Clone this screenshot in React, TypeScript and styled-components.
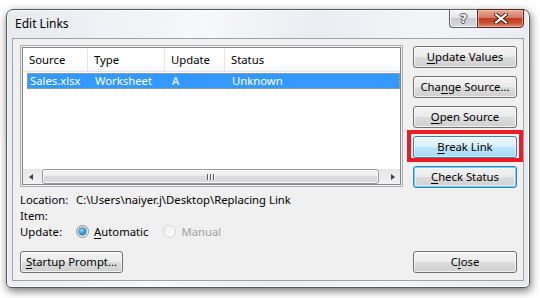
import React from "react";
import styled, { createGlobalStyle, css } from "styled-components";

const GlobalStyle = createGlobalStyle`
  html, body {
    margin: 0;
    padding: 0;
    background: #ffffff;
  }
  body {
    font-family: "Noto Sans", "Segoe UI", sans-serif;
    font-size: 11.3px;
    color: #000000;
  }
`;

const Page = styled.div`
  width: 540px;
  height: 298px;
  box-sizing: border-box;
  padding: 9px 0 0 6px;
  overflow: hidden;
`;

const Window = styled.div`
  width: 524px;
  height: 279px;
  box-sizing: border-box;
  display: flex;
  flex-direction: column;
  padding: 0 5px 6px 5px;
  border: 1px solid #55595e;
  border-radius: 7px 7px 5px 5px;
  background: linear-gradient(100deg, #e6ebf0 0%, #f6f8fa 35%, #e9edf1 55%, #f3f5f8 75%, #e4e9ee 100%);
  box-shadow: 1px 3px 9px rgba(0, 0, 0, 0.55), inset 0 0 0 1px rgba(255, 255, 255, 0.7);
`;

const TitleBar = styled.div`
  height: 28px;
  display: flex;
  align-items: flex-start;
`;

const Title = styled.div`
  padding-left: 3px;
  line-height: 28px;
  font-size: 12px;
  color: #000000;
`;

const CaptionButtons = styled.div`
  margin-left: auto;
  margin-top: -1px;
  display: flex;
`;

const CaptionButton = styled.div<{ $kind: "help" | "close" }>`
  height: 19px;
  box-sizing: border-box;
  display: flex;
  align-items: center;
  justify-content: center;
  border: 1px solid #5b5e63;
  ${(p) =>
    p.$kind === "help"
      ? css`
          width: 28px;
          border-right: none;
          border-radius: 0 0 0 4px;
          background: linear-gradient(#f4f5f6 0%, #e4e6e9 45%, #c8ccd1 50%, #d6dade 100%);
          box-shadow: inset 0 0 0 1px rgba(255, 255, 255, 0.75);
        `
      : css`
          width: 47px;
          border-color: #4b2a24;
          border-radius: 0 0 4px 0;
          background: linear-gradient(#e9a897 0%, #d67b65 45%, #c23d20 50%, #c94d31 75%, #e18e72 100%);
          box-shadow: inset 0 0 0 1px rgba(255, 200, 185, 0.6);
        `}
`;

const HelpGlyph = styled.span`
  font-family: "DejaVu Sans", sans-serif;
  font-weight: bold;
  font-size: 13px;
  line-height: 1;
  color: #f4f4f4;
  text-shadow: 1px 0 0 #555, -1px 0 0 #555, 0 1px 0 #555, 0 -1px 0 #555;
`;

const Client = styled.div`
  flex: 1;
  display: flex;
  flex-direction: column;
  border: 1px solid #9ea3a9;
  background: #f0f0f0;
  padding: 6px 6px 7px 7px;
`;

const TopSection = styled.div`
  display: grid;
  grid-template-columns: 383px 104px;
  column-gap: 10px;
`;

const ListBox = styled.div`
  height: 142px;
  box-sizing: border-box;
  border: 1px solid #a9abae;
  padding: 2px;
  background: #ffffff;
  box-shadow: inset 0 0 0 1px #f3f3f3, inset 0 0 0 2px #7f8387;
  display: flex;
  flex-direction: column;
`;

const HeaderRow = styled.div`
  height: 24px;
  display: grid;
  grid-template-columns: 65px 77px 60px 1fr;
  background: linear-gradient(#ffffff 0%, #ffffff 60%, #f6f7f9 100%);
  border-bottom: 1px solid #e3e5e8;
  box-sizing: border-box;
`;

const HeaderCell = styled.div`
  padding-left: 6px;
  line-height: 24px;
  border-right: 1px solid #e3e5e8;
  &:last-child {
    border-right: none;
  }
`;

const DataRow = styled.div<{ $selected?: boolean }>`
  margin: 1px 0 0 4px;
  height: 16px;
  box-sizing: border-box;
  display: grid;
  grid-template-columns: 61px 77px 60px 1fr;
  ${(p) =>
    p.$selected &&
    css`
      background: #3399ff;
      color: #ffffff;
      border: 1px dotted #e2a04a;
    `}
`;

const DataCell = styled.div`
  padding-left: 6px;
  line-height: 14px;
  white-space: nowrap;
  &:first-child {
    padding-left: 2px;
  }
`;

const Filler = styled.div`
  flex: 1;
`;

const ScrollBar = styled.div`
  height: 15px;
  display: flex;
  background: linear-gradient(#e7e7e7, #f1f1f1);
`;

const ScrollArrow = styled.div<{ $dir: "left" | "right" }>`
  width: 18px;
  display: flex;
  align-items: center;
  justify-content: center;
  &::before {
    content: "";
    width: 0;
    height: 0;
    border-top: 3.5px solid transparent;
    border-bottom: 3.5px solid transparent;
    ${(p) =>
      p.$dir === "left"
        ? css`
            border-right: 4px solid #3f3f3f;
            margin-right: 2px;
          `
        : css`
            border-left: 4px solid #3f3f3f;
            margin-left: 3px;
          `}
  }
`;

const ScrollThumb = styled.div`
  flex: 1;
  margin: 0 3px 0 1px;
  box-sizing: border-box;
  border: 1px solid #9a9a9a;
  border-radius: 3px;
  background: linear-gradient(#f5f5f5 0%, #ececec 50%, #dcdcdc 50%, #d8d8d8 100%);
  box-shadow: inset 0 0 0 1px rgba(255, 255, 255, 0.8);
  display: flex;
  align-items: center;
  justify-content: center;
  gap: 2px;
`;

const Grip = styled.span`
  width: 1px;
  height: 6px;
  background: #5c5c5c;
  box-shadow: 1px 0 0 #ffffff;
`;

const Info = styled.div`
  margin-top: 4px;
  display: flex;
  flex-direction: column;
`;

const InfoRow = styled.div<{ $tall?: boolean }>`
  display: grid;
  grid-template-columns: 56px 1fr;
  height: ${(p) => (p.$tall ? "17px" : "16px")};
  align-items: center;
  white-space: nowrap;
`;

const RadioGroup = styled.div`
  display: flex;
  align-items: center;
`;

const RadioLabel = styled.label<{ $disabled?: boolean }>`
  display: flex;
  align-items: center;
  gap: 5px;
  margin-right: 15px;
  color: ${(p) => (p.$disabled ? "#a0a0a0" : "#000000")};
`;

const RadioCircle = styled.span<{ $checked?: boolean; $disabled?: boolean }>`
  width: 13px;
  height: 13px;
  box-sizing: border-box;
  border-radius: 50%;
  display: flex;
  align-items: center;
  justify-content: center;
  border: 1px solid ${(p) => (p.$disabled ? "#d2d2d2" : "#8c8f91")};
  background: ${(p) =>
    p.$disabled
      ? "linear-gradient(135deg, #f1f1f1, #fafafa)"
      : "linear-gradient(135deg, #d6d7d8, #fdfdfd)"};
  &::after {
    content: "";
    width: 7px;
    height: 7px;
    border-radius: 50%;
    display: ${(p) => (p.$checked ? "block" : "none")};
    background: radial-gradient(circle at 40% 35%, #a8e2fb 0%, #3aa0e3 40%, #0b5fa8 100%);
    box-shadow: 0 0 0 0.5px #1c5a8a;
  }
`;

const ButtonColumn = styled.div`
  padding-top: 1px;
  display: flex;
  flex-direction: column;
  gap: 8px;
`;

type ButtonState = "normal" | "hot" | "focus";

const Button = styled.button<{ $state?: ButtonState; $width?: number }>`
  width: ${(p) => p.$width ?? 104}px;
  height: 22px;
  box-sizing: border-box;
  padding: 0 0 1px 0;
  font-family: "Noto Sans", "Segoe UI", sans-serif;
  font-size: 11.3px;
  color: #000000;
  border-radius: 3px;
  border: 1px solid #707070;
  background: linear-gradient(#f2f2f2 0%, #ebebeb 50%, #dddddd 50%, #cfcfcf 100%);
  box-shadow: inset 0 0 0 1px rgba(255, 255, 255, 0.75);
  white-space: nowrap;
  ${(p) =>
    p.$state === "hot" &&
    css`
      border-color: #3c7fb1;
      background: linear-gradient(#eaf6fd 0%, #d9f0fc 50%, #bee6fd 50%, #a7d9f5 100%);
      box-shadow: inset 0 0 0 1px rgba(255, 255, 255, 0.6);
    `}
  ${(p) =>
    p.$state === "focus" &&
    css`
      border-color: #3c7fb1;
      box-shadow: inset 0 0 0 1px #5fd6f7, inset 0 0 0 2px rgba(255, 255, 255, 0.5);
    `}
`;

const Highlight = styled.div`
  position: relative;
  &::after {
    content: "";
    position: absolute;
    top: -6px;
    bottom: -4px;
    left: -6px;
    right: -6px;
    border: 4px solid #ed1c24;
    pointer-events: none;
  }
`;

const BottomRow = styled.div`
  margin-top: auto;
  display: flex;
  justify-content: space-between;
`;

const Key = styled.span`
  text-decoration: underline;
  text-underline-offset: 2px;
`;

const CloseGlyph = () => (
  <svg width="14" height="11" viewBox="0 0 14 11">
    <path d="M2 1.5 L12 9.5 M12 1.5 L2 9.5" stroke="#3b1f1a" strokeWidth="4" strokeLinecap="square" />
    <path d="M2 1.5 L12 9.5 M12 1.5 L2 9.5" stroke="#ffffff" strokeWidth="2" strokeLinecap="square" />
  </svg>
);

const App: React.FC = () => {
  return (
    <>
      <GlobalStyle />
      <Page>
        <Window>
          <TitleBar>
            <Title>Edit Links</Title>
            <CaptionButtons>
              <CaptionButton $kind="help">
                <HelpGlyph>?</HelpGlyph>
              </CaptionButton>
              <CaptionButton $kind="close">
                <CloseGlyph />
              </CaptionButton>
            </CaptionButtons>
          </TitleBar>
          <Client>
            <TopSection>
              <div>
                <ListBox>
                  <HeaderRow>
                    <HeaderCell>Source</HeaderCell>
                    <HeaderCell>Type</HeaderCell>
                    <HeaderCell>Update</HeaderCell>
                    <HeaderCell>Status</HeaderCell>
                  </HeaderRow>
                  <DataRow $selected>
                    <DataCell>Sales.xlsx</DataCell>
                    <DataCell>Worksheet</DataCell>
                    <DataCell>A</DataCell>
                    <DataCell>Unknown</DataCell>
                  </DataRow>
                  <Filler />
                  <ScrollBar>
                    <ScrollArrow $dir="left" />
                    <ScrollThumb>
                      <Grip />
                      <Grip />
                      <Grip />
                    </ScrollThumb>
                    <ScrollArrow $dir="right" />
                  </ScrollBar>
                </ListBox>
                <Info>
                  <InfoRow>
                    <span>Location:</span>
                    <span>C:\Users\naiyer.j\Desktop\Replacing Link</span>
                  </InfoRow>
                  <InfoRow>
                    <span>Item:</span>
                    <span></span>
                  </InfoRow>
                  <InfoRow $tall>
                    <span>Update:</span>
                    <RadioGroup>
                      <RadioLabel>
                        <RadioCircle $checked />
                        <span>
                          <Key>A</Key>utomatic
                        </span>
                      </RadioLabel>
                      <RadioLabel $disabled>
                        <RadioCircle $disabled />
                        <span>Manual</span>
                      </RadioLabel>
                    </RadioGroup>
                  </InfoRow>
                </Info>
              </div>
              <ButtonColumn>
                <Button>
                  <Key>U</Key>pdate Values
                </Button>
                <Button>
                  Cha<Key>n</Key>ge Source...
                </Button>
                <Button>
                  <Key>O</Key>pen Source
                </Button>
                <Highlight>
                  <Button $state="hot">
                    <Key>B</Key>reak Link
                  </Button>
                </Highlight>
                <Button $state="focus">
                  <Key>C</Key>heck Status
                </Button>
              </ButtonColumn>
            </TopSection>
            <BottomRow>
              <Button $width={103}>
                <Key>S</Key>tartup Prompt...
              </Button>
              <Button>
                C<Key>l</Key>ose
              </Button>
            </BottomRow>
          </Client>
        </Window>
      </Page>
    </>
  );
};

export default App;
